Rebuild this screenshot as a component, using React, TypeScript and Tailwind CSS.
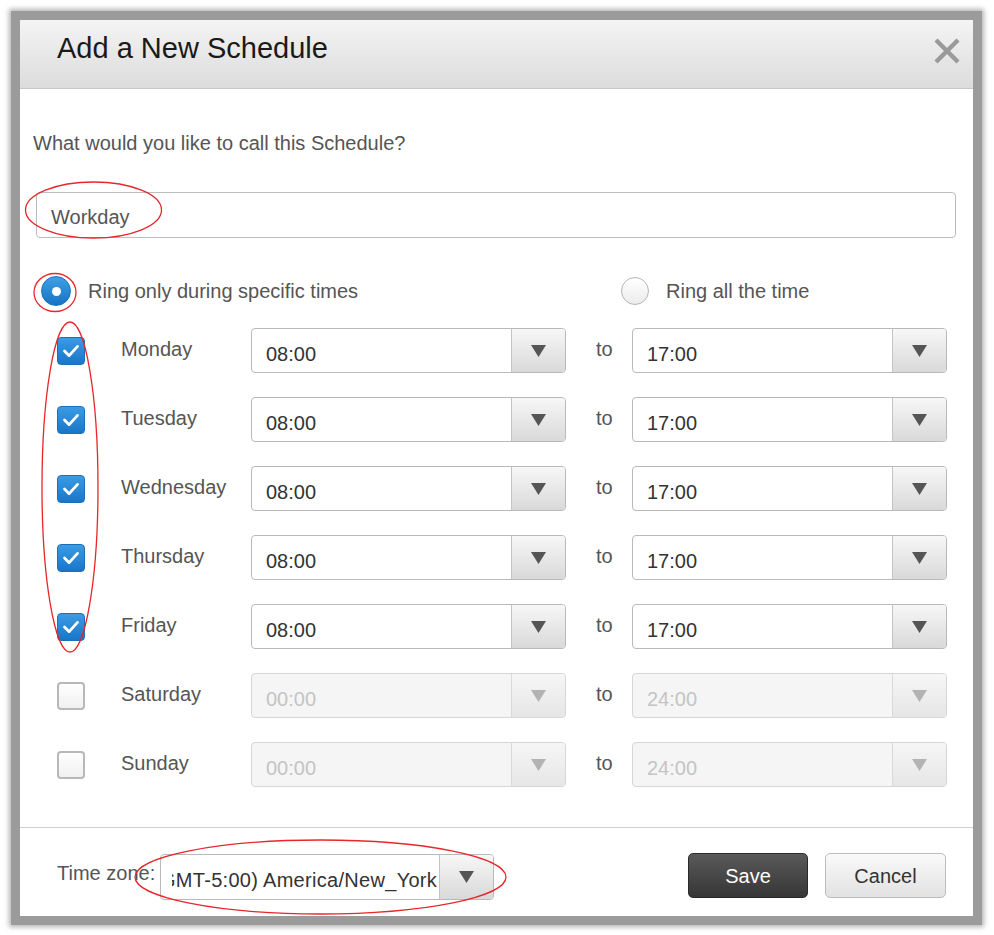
import React from "react";

const FONT = { fontFamily: '"Liberation Sans", Arial, sans-serif' };

function Triangle({ disabled }: { disabled?: boolean }) {
  return (
    <svg width="15" height="12" viewBox="0 0 15 12">
      <polygon points="0,0 15,0 7.5,12" fill={disabled ? "#b3b3b3" : "#555555"} />
    </svg>
  );
}

function Select({ value, disabled }: { value: string; disabled?: boolean }) {
  return (
    <div
      className={`flex h-[45px] w-[315px] overflow-hidden rounded-[4px] border ${
        disabled ? "border-[#d6d6d6] bg-[#f5f5f5]" : "border-[#b9b9b9] bg-white"
      }`}
    >
      <div
        className={`flex flex-1 items-center pl-[14px] pt-[7px] text-[20px] leading-[23px] ${
          disabled ? "text-[#c4c4c4]" : "text-[#333333]"
        }`}
      >
        {value}
      </div>
      <div
        className={`flex w-[54px] items-center justify-center border-l ${
          disabled
            ? "border-[#d9d9d9] bg-gradient-to-b from-[#f6f6f6] to-[#e6e6e6]"
            : "border-[#c4c4c4] bg-gradient-to-b from-[#f7f7f7] to-[#d9d9d9]"
        }`}
      >
        <Triangle disabled={disabled} />
      </div>
    </div>
  );
}

function Checkbox({ checked }: { checked: boolean }) {
  if (checked) {
    return (
      <div className="flex h-[28px] w-[28px] items-center justify-center rounded-[4px] border border-[#1d6fb8] bg-gradient-to-b from-[#3b9be3] to-[#1876c9]">
        <svg width="28" height="28" viewBox="0 0 28 28">
          <polyline
            points="7,14 12,19 21,9"
            fill="none"
            stroke="white"
            strokeWidth="3"
            strokeLinecap="round"
            strokeLinejoin="round"
          />
        </svg>
      </div>
    );
  }
  return (
    <div className="h-[28px] w-[28px] rounded-[4px] border-2 border-[#b8b8b8] bg-gradient-to-b from-white to-[#f0f0f0]" />
  );
}

const days = [
  { d: "Monday", on: true },
  { d: "Tuesday", on: true },
  { d: "Wednesday", on: true },
  { d: "Thursday", on: true },
  { d: "Friday", on: true },
  { d: "Saturday", on: false },
  { d: "Sunday", on: false },
];

export default function App() {
  return (
    <div className="relative h-[935px] w-[994px] bg-white" style={FONT}>
      <div className="absolute left-[11px] top-[11px] w-[971px] border-[9px] border-[#9b9b9b] shadow-[0_0_5px_2px_rgba(0,0,0,0.3)]">
        <div className="flex h-[896px] flex-col bg-white">
          {/* Header */}
          <div className="flex h-[69px] items-start justify-between border-b border-[#c6c6c6] bg-gradient-to-b from-[#f4f4f4] to-[#dcdcdc] pl-[37px] pr-[13px]">
            <div className="pt-[11px] text-[29px] leading-[34px] text-[#1a1a1a]">Add a New Schedule</div>
            <div className="pt-[18px]">
              <svg width="26" height="26" viewBox="0 0 26 26">
                <line x1="2" y1="2" x2="24" y2="24" stroke="#9a9a9a" strokeWidth="4.5" />
                <line x1="24" y1="2" x2="2" y2="24" stroke="#9a9a9a" strokeWidth="4.5" />
              </svg>
            </div>
          </div>

          {/* Body */}
          <div className="flex flex-1 flex-col pl-[13px]">
            <div className="pt-[43px] text-[20px] leading-[23px] text-[#555555]">
              What would you like to call this Schedule?
            </div>
            <div className="ml-[3px] mt-[37px] flex h-[46px] w-[920px] items-center rounded-[4px] border border-[#bdbdbd] pl-[14px] pt-[4px] text-[20px] leading-[23px] text-[#555555]">
              Workday
            </div>

            <div className="mt-[38px] flex h-[30px] items-center">
              <div className="ml-[8px] flex w-[580px] items-center">
                <div className="flex h-[30px] w-[30px] items-center justify-center rounded-full border border-[#1b70bb] bg-gradient-to-b from-[#3ea0e6] to-[#1773c4]">
                  <div className="h-[9px] w-[9px] rounded-full bg-white" />
                </div>
                <div className="ml-[17px] text-[20px] leading-[23px] text-[#555555]">
                  Ring only during specific times
                </div>
              </div>
              <div className="flex items-center">
                <div className="h-[28px] w-[28px] rounded-full border border-[#b5b5b5] bg-gradient-to-b from-white to-[#ececec]" />
                <div className="ml-[17px] text-[20px] leading-[23px] text-[#555555]">Ring all the time</div>
              </div>
            </div>

            <div className="mt-[22px] flex flex-col gap-[24px]">
              {days.map((r) => (
                <div key={r.d} className="flex h-[45px] items-center">
                  <div className="w-[88px] pl-[24px]">
                    <Checkbox checked={r.on} />
                  </div>
                  <div className="-mt-[3px] w-[130px] text-[20px] leading-[23px] text-[#555555]">{r.d}</div>
                  <Select value={r.on ? "08:00" : "00:00"} disabled={!r.on} />
                  <div className="-mt-[2px] w-[66px] pl-[30px] text-[20px] leading-[23px] text-[#555555]">to</div>
                  <Select value={r.on ? "17:00" : "24:00"} disabled={!r.on} />
                </div>
              ))}
            </div>
          </div>

          {/* Footer */}
          <div className="flex h-[89px] items-start border-t border-[#cfcfcf] pl-[37px] pr-[27px]">
            <div className="mt-[34px] w-[103px] text-[20px] leading-[23px] text-[#555555]">Time zone:</div>
            <div className="mt-[26px] flex h-[46px] w-[334px] overflow-hidden rounded-[4px] border border-[#b9b9b9] bg-white">
              <div className="ml-[11px] flex w-[267px] items-center overflow-hidden pt-[6px]">
                <span className="-ml-[19px] whitespace-nowrap text-[20px] leading-[23px] tracking-[0.3px] text-[#333333]">
                  (GMT-5:00) America/New_York
                </span>
              </div>
              <div className="flex w-[54px] items-center justify-center border-l border-[#c4c4c4] bg-gradient-to-b from-[#f7f7f7] to-[#d9d9d9]">
                <Triangle />
              </div>
            </div>
            <div className="ml-auto mt-[25px] flex gap-[17px]">
              <div className="flex h-[45px] w-[120px] items-center justify-center rounded-[5px] border border-[#2a2a2a] bg-gradient-to-b from-[#5a5a5a] to-[#363636] pt-[2px] text-[20px] leading-[23px] text-white">
                Save
              </div>
              <div className="flex h-[45px] w-[121px] items-center justify-center rounded-[5px] border border-[#bdbdbd] bg-gradient-to-b from-[#fafafa] to-[#e2e2e2] pt-[2px] text-[20px] leading-[23px] text-[#333333]">
                Cancel
              </div>
            </div>
          </div>
        </div>
      </div>

      {/* Red annotation ellipses */}
      <svg className="pointer-events-none absolute left-0 top-0" width="994" height="935" viewBox="0 0 994 935">
        <ellipse cx="93.5" cy="210" rx="68" ry="28" fill="none" stroke="#e8262b" strokeWidth="1.3" />
        <ellipse cx="55" cy="292.5" rx="21" ry="19" fill="none" stroke="#e8262b" strokeWidth="1.3" />
        <ellipse cx="70" cy="487" rx="28" ry="165" fill="none" stroke="#e8262b" strokeWidth="1.3" />
        <ellipse cx="320.5" cy="877" rx="185.5" ry="37" fill="none" stroke="#e8262b" strokeWidth="1.3" />
      </svg>
    </div>
  );
}
